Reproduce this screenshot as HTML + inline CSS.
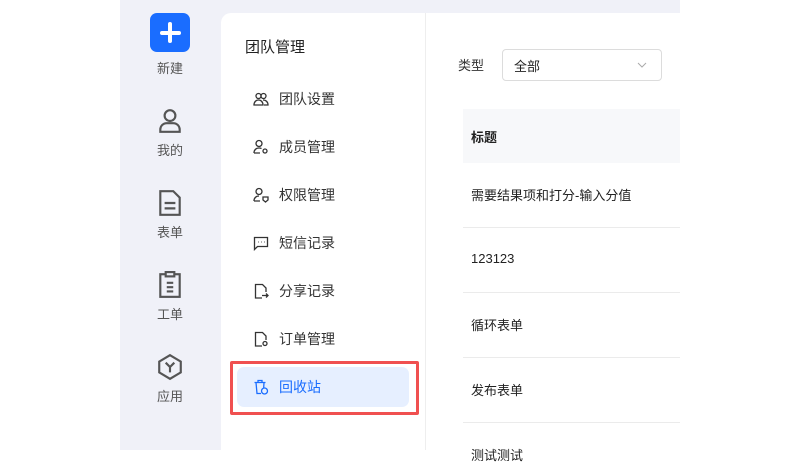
<!DOCTYPE html>
<html><head><meta charset="utf-8"><style>
*{margin:0;padding:0;box-sizing:border-box}
body{width:800px;height:450px;overflow:hidden;background:#fff;font-family:"Liberation Sans","Noto Sans CJK SC",sans-serif;position:relative}
.side{position:absolute;left:120px;top:0;width:560px;height:450px;background:#f0f1f8}
.nav{position:absolute;left:120px;width:100px;text-align:center;font-size:13px;color:#555;line-height:16px}
.nav svg{display:block;margin:0 auto 8px}
.panel{position:absolute;left:221px;top:13px;width:459px;height:437px;background:#fff;border-top-left-radius:10px}
.div{position:absolute;left:425px;top:13px;width:1px;height:437px;background:#eee}
.title{position:absolute;left:245px;top:36px;font-size:15px;color:#222}
.mi{position:absolute;left:253px;font-size:14px;color:#333;display:flex;align-items:center}
.mi svg{margin-right:10px}
.active{position:absolute;left:237px;top:367px;width:172px;height:40px;background:#e6efff;border-radius:7px}
.red{position:absolute;left:230px;top:361px;width:189px;height:54px;border:3px solid #f05050;border-radius:2px}
.cell{position:absolute;left:471px;font-size:13px;color:#222}
.line{position:absolute;left:463px;width:217px;height:1px;background:#ebebeb}
</style></head><body>
<div class="side"></div>
<div style="position:absolute;left:150px;top:13px;width:40px;height:39px;background:#1a6dff;border-radius:7px"></div>
<div style="position:absolute;left:168px;top:22px;width:4px;height:21px;background:#fff;border-radius:2px"></div>
<div style="position:absolute;left:160px;top:31px;width:21px;height:4px;background:#fff;border-radius:2px"></div>
<div class="nav" style="top:61px">新建</div>
<div class="nav" style="top:107px"><svg width="26" height="28" viewBox="0 0 24 26" fill="none" stroke="#555" stroke-width="2"><circle cx="12" cy="8" r="5"/><path d="M3 23v-2a6 6 0 0 1 6-6h6a6 6 0 0 1 6 6v2z"/></svg>我的</div>
<div class="nav" style="top:189px"><svg width="26" height="28" viewBox="0 0 24 26" fill="none" stroke="#555" stroke-width="2"><path d="M3 2h12l6 6v16H3z"/><path d="M7 13h10M7 18h10"/></svg>表单</div>
<div class="nav" style="top:271px"><svg width="26" height="28" viewBox="0 0 24 26" fill="none" stroke="#555" stroke-width="2"><rect x="3" y="3" width="18" height="21"/><rect x="8" y="1" width="8" height="4" fill="#f0f1f8"/><path d="M9 11h6M9 15h6M9 19h6"/></svg>工单</div>
<div class="nav" style="top:353px"><svg width="26" height="28" viewBox="0 0 24 26" fill="none" stroke="#555" stroke-width="2"><path d="M12 2l10 6v10l-10 6-10-6V8z"/><path d="M8 9l4 4 4-4M12 13v5"/></svg>应用</div>
<div class="panel"></div>
<div class="div"></div>
<div class="title">团队管理</div>
<div class="active"></div>
<div class="red"></div>
<div class="mi" style="top:89px"><svg width="16" height="16" viewBox="0 0 16 16" fill="none" stroke="#333" stroke-width="1.3"><circle cx="5.5" cy="5" r="2.5"/><circle cx="10.5" cy="5" r="2.5"/><path d="M1 14c0-3 2-5 4.5-5s4.5 2 4.5 5zM10 9c3 0 5 2 5 5h-4"/></svg>团队设置</div>
<div class="mi" style="top:137px"><svg width="16" height="16" viewBox="0 0 16 16" fill="none" stroke="#333" stroke-width="1.3"><circle cx="6" cy="4.5" r="3"/><path d="M1 14c0-3 2-5 5-5 1 0 2 .3 2.5.6M1 14h6"/><circle cx="12" cy="12" r="2"/></svg>成员管理</div>
<div class="mi" style="top:185px"><svg width="16" height="16" viewBox="0 0 16 16" fill="none" stroke="#333" stroke-width="1.3"><circle cx="6" cy="4.5" r="3"/><path d="M1 14c0-3 2-5 5-5M1 14h6M10 10h5v3l-2.5 2-2.5-2z"/></svg>权限管理</div>
<div class="mi" style="top:233px"><svg width="16" height="16" viewBox="0 0 16 16" fill="none" stroke="#333" stroke-width="1.3"><path d="M1.5 2.5h13v9h-10l-3 3z"/><path d="M5 7h.5M8 7h.5M11 7h.5" stroke-width="1.6"/></svg>短信记录</div>
<div class="mi" style="top:281px"><svg width="16" height="16" viewBox="0 0 16 16" fill="none" stroke="#333" stroke-width="1.3"><path d="M9 15H2.5V1.5h7l3.5 3.5v4"/><path d="M9 12.5h6M13 10.5l2 2-2 2"/></svg>分享记录</div>
<div class="mi" style="top:329px"><svg width="16" height="16" viewBox="0 0 16 16" fill="none" stroke="#333" stroke-width="1.3"><path d="M9 15H2.5V1.5h7l3.5 3.5v4"/><circle cx="12" cy="12.5" r="2"/></svg>订单管理</div>
<div class="mi" style="top:377px;color:#1a6dff"><svg width="16" height="16" viewBox="0 0 16 16" fill="none" stroke="#1a6dff" stroke-width="1.3"><path d="M1.5 3.5h11M5 3.5V1.5h4v2M3 3.5l1 11h4M11 3.5l-.3 5"/><circle cx="11.5" cy="12" r="3"/></svg>回收站</div>
<div style="position:absolute;left:458px;top:55px;font-size:13px;color:#333">类型</div>
<div style="position:absolute;left:502px;top:49px;width:160px;height:32px;border:1px solid #dcdcdc;border-radius:4px;font-size:13px;color:#222;padding:6px 11px">全部<svg style="position:absolute;right:14px;top:12px" width="10" height="6" viewBox="0 0 10 6" fill="none" stroke="#aaa"><path d="M1 1l4 4 4-4"/></svg></div>
<div style="position:absolute;left:463px;top:109px;width:217px;height:54px;background:#f7f8fa"></div>
<div class="cell" style="top:127px;font-weight:bold">标题</div>
<div class="cell" style="top:185px">需要结果项和打分-输入分值</div>
<div class="line" style="top:227px"></div>
<div class="cell" style="top:251px">123123</div>
<div class="line" style="top:292px"></div>
<div class="cell" style="top:315px">循环表单</div>
<div class="line" style="top:357px"></div>
<div class="cell" style="top:380px">发布表单</div>
<div class="line" style="top:422px"></div>
<div class="cell" style="top:445px">测试测试</div>
</body></html>
